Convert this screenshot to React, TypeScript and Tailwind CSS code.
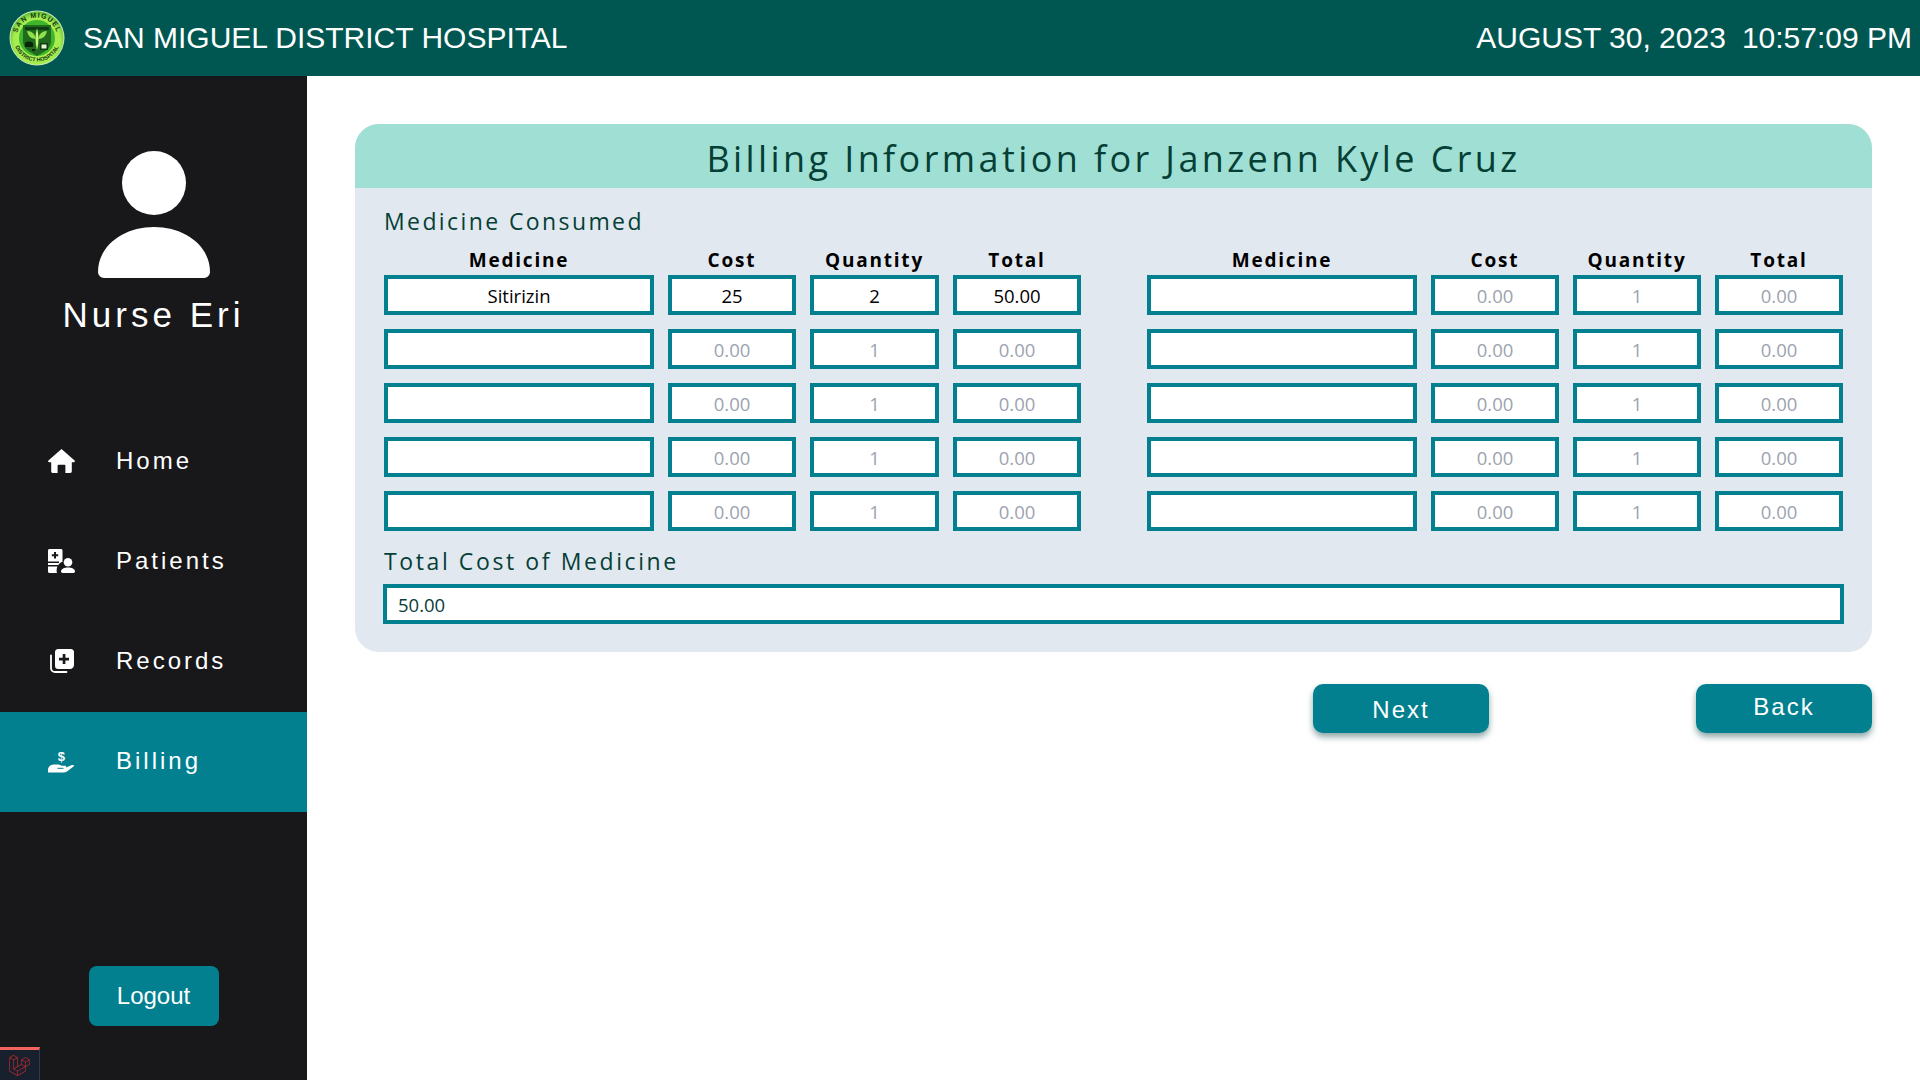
import React from "react";
import { FaLaravel } from "react-icons/fa";

const liberation = "[font-family:'Liberation_Sans',Arial,sans-serif]";

function Logo() {
  return (
    <svg width="56" height="56" viewBox="0 0 56 56" className="shrink-0">
      <defs>
        <path id="ringTop" d="M7.5 28a20.5 20.5 0 0 1 41 0" />
        <path id="ringBottom" d="M4.5 28a23.5 23.5 0 0 0 47 0" />
        <radialGradient id="ringFill" cx="50%" cy="55%" r="55%">
          <stop offset="0%" stopColor="#b8f05a" />
          <stop offset="80%" stopColor="#a4ec4e" />
          <stop offset="100%" stopColor="#5ab935" />
        </radialGradient>
      </defs>
      <circle cx="28" cy="28" r="27.5" fill="#c9e9b4" />
      <circle cx="28" cy="28" r="26.5" fill="url(#ringFill)" />
      <text fontSize="7" fontWeight="700" fill="#12330f" letterSpacing="1" fontFamily="Liberation Sans">
        <textPath href="#ringTop" startOffset="50%" textAnchor="middle">SAN MIGUEL</textPath>
      </text>
      <text fontSize="5.6" fontWeight="700" fill="#12330f" fontFamily="Liberation Sans">
        <textPath href="#ringBottom" startOffset="50%" textAnchor="middle">DISTRICT HOSPITAL</textPath>
      </text>
      <circle cx="28" cy="28" r="18" fill="#3fb52c" />
      <path d="M14 15h28v16c0 8-7 11-14 15-7-4-14-7-14-15z" fill="#1f6a1d" />
      <path d="M16 17h24v3H16z" fill="#0f3d12" />
      <path d="M28 18c-2 7-2 15 0 22 2-7 2-15 0-22z" fill="#c6f47a" />
      <path d="M18 21c5 0 8 3 9 8-5 0-8-3-9-8zM38 21c-5 0-8 3-9 8 5 0 8-3 9-8z" fill="#8fe04a" />
      <path d="M16 33c2-2 6-2 8 0v4h-8zM23 39h3v2h-3z" fill="#0a240a" />
      <path d="M31 33h8v7h-8z" fill="#0f3d12" />
      <path d="M32.500 34.500h5v4h-5z" fill="#e4f5d0" />
    </svg>
  );
}

function HomeIcon() {
  return (
    <svg width="27" height="24" viewBox="0 0 27 24" fill="#fff" className="shrink-0">
      <path d="M13.500 0 26.600 11.600c.7.7.3 1.600-.6 1.600h-2.200v9c0 1-.7 1.800-1.800 1.800h-4.600v-7.200c0-.6-.4-1-1-1h-5.800c-.6 0-1 .4-1 1V24H5c-1.100 0-1.800-.8-1.800-1.800v-9H1c-.9 0-1.300-.9-.6-1.600z" />
    </svg>
  );
}

function PatientsIcon() {
  return (
    <svg width="27" height="24" viewBox="0 0 27 24" className="shrink-0">
      <path fillRule="evenodd" fill="#fff" d="M1.500 0H13c.8 0 1.500.7 1.500 1.500v11.300c-1.900.6-3.600 2-4.500 3.700V16H0v-2h11v-1.500H0V1.500C0 .7.700 0 1.500 0zM6 3v2.200H3.800v2H6v2.200h2V7.200h2.200v-2H8V3zM0 17.500h9.400c-.5 1.200-.8 2.800-.8 4.400 0 .8.200 1.500.5 2.100H1.500C.7 24 0 23.300 0 22.500z" />
      <circle cx="20" cy="13.200" r="4.300" fill="#fff" />
      <path fill="#fff" d="M20 18.500c3.800 0 7 1.600 7 3.800 0 1-.8 1.700-1.700 1.700H14.700c-.9 0-1.700-.7-1.700-1.700 0-2.200 3.200-3.800 7-3.800z" />
    </svg>
  );
}

function RecordsIcon() {
  return (
    <svg width="24" height="24" viewBox="0 0 24 24" fill="none" className="ml-[2px] shrink-0">
      <path d="M1 6.500V19c0 2.200 1.800 4 4 4h11.500" stroke="#fff" strokeWidth="1.800" strokeLinecap="round" />
      <path fillRule="evenodd" fill="#fff" d="M8 0h13c1.600 0 3 1.400 3 3v13c0 2.300-1.700 4-4 4H8c-1.700 0-3-1.300-3-3V3c0-1.600 1.400-3 3-3zm4.700 5v3.700H9v2.700h3.700V15h2.700v-3.600H19V8.700h-3.600V5z" />
    </svg>
  );
}

function BillingIcon() {
  return (
    <svg width="27" height="24" viewBox="0 0 27 24" fill="#fff" className="shrink-0">
      <text x="13.300" y="11.500" textAnchor="middle" fontSize="13" fontWeight="700" fontFamily="Liberation Sans">$</text>
      <path d="M0 21c0-2.600 2.400-5.500 5.500-5.500h4c1.700 0 3 .6 4 1.300h3.200c1 0 1.500.5 1.500 1.200 0 .2 0 .4-.1.500l5.200-2.300c1-.4 2-.3 2.700.2.300.3.100.6-.2.800l-6.800 5.400c-1 .7-2.100.9-3.200.9H0z" />
      <path d="M9.500 19.300h6" stroke="#028090" strokeWidth="1" />
    </svg>
  );
}

function NavItem({ icon, label, active }: { icon: React.ReactNode; label: string; active?: boolean }) {
  return (
    <div className={`h-[100px] flex items-center ${active ? "bg-[#028090]" : ""}`}>
      <div className="w-[116px] pl-[48px] pb-[2px] flex items-center">{icon}</div>
      <span className={`${liberation} pb-[2px] text-[24px] leading-none tracking-[3px] text-white`}>{label}</span>
    </div>
  );
}

const inputBase =
  "block h-[40px] border-[4px] border-[#028090] bg-white text-center text-[18.5px] text-black placeholder:text-[#9ca3af] outline-none rounded-none [font-family:'Open_Sans',sans-serif]";

function Cell({ value, placeholder, width }: { value?: string; placeholder?: string; width: string }) {
  return <input readOnly value={value ?? ""} placeholder={placeholder} className={`${inputBase} ${width}`} />;
}

function Group({ widthClass, totalWidth, first }: { widthClass: string; totalWidth: string; first?: boolean }) {
  const rows = [0, 1, 2, 3, 4];
  const heads = ["Medicine", "Cost", "Quantity", "Total"];
  const widths = ["w-[270px]", "w-[128px]", totalWidth, "w-[128px]"];
  return (
    <div className={`${widthClass} flex flex-col`}>
      <div className="flex gap-[14px] h-[36px] pt-[6px] items-center">
        {heads.map((h, i) => (
          <div key={h} className={`${widths[i]} text-center text-[19px] leading-none font-bold text-black tracking-[1.800px] [font-family:'Open_Sans',sans-serif]`}>
            {h}
          </div>
        ))}
      </div>
      <div className="flex flex-col gap-[14px]">
        {rows.map((r) => {
          const filled = first && r === 0;
          return (
            <div key={r} className="flex gap-[14px]">
              <Cell width={widths[0]} value={filled ? "Sitirizin" : ""} />
              <Cell width={widths[1]} value={filled ? "25" : ""} placeholder="0.00" />
              <Cell width={widths[2]} value={filled ? "2" : ""} placeholder="1" />
              <Cell width={widths[3]} value={filled ? "50.00" : ""} placeholder="0.00" />
            </div>
          );
        })}
      </div>
    </div>
  );
}

export default function App() {
  return (
    <div className="relative h-screen w-full overflow-hidden bg-white flex flex-col">
      <header className={`${liberation} h-[76px] shrink-0 bg-[#005751] flex items-center justify-between pl-[9px] pr-[8px] text-white text-[30px] leading-none`}>
        <div className="flex items-center gap-[18px]">
          <Logo />
          <span className="pb-[1px]">SAN MIGUEL DISTRICT HOSPITAL</span>
        </div>
        <div className="flex gap-[16px] pb-[1px]">
          <span>AUGUST 30, 2023</span>
          <span>10:57:09 PM</span>
        </div>
      </header>

      <div className="flex-1 flex min-h-0">
        <aside className="w-[307px] shrink-0 bg-[#18181b] flex flex-col">
          <div className="flex flex-col items-center pt-[75px]">
            <svg width="112" height="127" viewBox="0 0 112 127" fill="#fff">
              <ellipse cx="56" cy="32" rx="32" ry="32" />
              <path d="M56 76c31 0 56 19 56 45 0 3-3 6-6 6H6c-3 0-6-3-6-6 0-26 25-45 56-45z" />
            </svg>
            <div className={`${liberation} mt-[17px] text-[35px] leading-[40px] tracking-[4px] text-white`}>Nurse Eri</div>
          </div>
          <nav className="mt-[77px] flex flex-col">
            <NavItem icon={<HomeIcon />} label="Home" />
            <NavItem icon={<PatientsIcon />} label="Patients" />
            <NavItem icon={<RecordsIcon />} label="Records" />
            <NavItem icon={<BillingIcon />} label="Billing" active />
          </nav>
          <div className="mt-auto mb-[54px] flex justify-center">
            <button className={`${liberation} w-[130px] h-[60px] rounded-[8px] bg-[#028090] text-white text-[24px]`}>Logout</button>
          </div>
        </aside>

        <main className="flex-1 min-w-0 pt-[48px] pl-[48px] pr-[48px]">
          <section className="rounded-[24px] overflow-hidden bg-[#e2e8f0]">
            <div className="h-[64px] bg-[#a0dfd3] flex items-center justify-center pt-[5px]">
              <h1 className="text-[36px] leading-none font-medium text-[#053f36] tracking-[3.400px] [font-family:'Open_Sans',sans-serif]">
                Billing Information for Janzenn Kyle Cruz
              </h1>
            </div>
            <div className="px-[29px] pt-[15px] pb-[28px]">
              <h2 className="h-[36px] flex items-center text-[23px] leading-none font-medium text-[#053f36] tracking-[2.400px] [font-family:'Open_Sans',sans-serif]">
                Medicine Consumed
              </h2>
              <div className="flex justify-between">
                <Group widthClass="w-[697px]" totalWidth="w-[129px]" first />
                <Group widthClass="w-[696px]" totalWidth="w-[128px]" />
              </div>
              <h2 className="mt-[12px] h-[36px] flex items-center text-[23px] leading-none font-medium text-[#053f36] tracking-[2.600px] [font-family:'Open_Sans',sans-serif]">
                Total Cost of Medicine
              </h2>
              <input
                readOnly
                value="50.00"
                className="-mx-px mt-[5px] block h-[40px] w-[1461px] border-[4px] border-[#028090] bg-white pl-[11px] text-[18.5px] font-medium text-[#0b3b38] outline-none [font-family:'Open_Sans',sans-serif]"
              />
            </div>
          </section>
          <div className={`${liberation} mt-[32px] flex justify-end gap-[207px]`}>
            <button className="w-[176px] h-[49px] rounded-[10px] bg-[#028090] text-white text-[24px] tracking-[2px] shadow-[0_4px_6px_rgba(0,60,60,0.45)] pt-[3px]">Next</button>
            <button className="w-[176px] h-[49px] rounded-[10px] bg-[#028090] text-white text-[24px] tracking-[2px] shadow-[0_4px_6px_rgba(0,60,60,0.45)] pb-[3px]">Back</button>
          </div>
        </main>
      </div>

      <div className="absolute left-0 bottom-0 w-[40px] h-[33px] bg-[#18202e] border-t-[3px] border-t-[#f4645f] border-r border-r-[#2f3a4d] flex items-center justify-center">
        <FaLaravel className="text-[#b92b2b]" size={21} />
      </div>
    </div>
  );
}
